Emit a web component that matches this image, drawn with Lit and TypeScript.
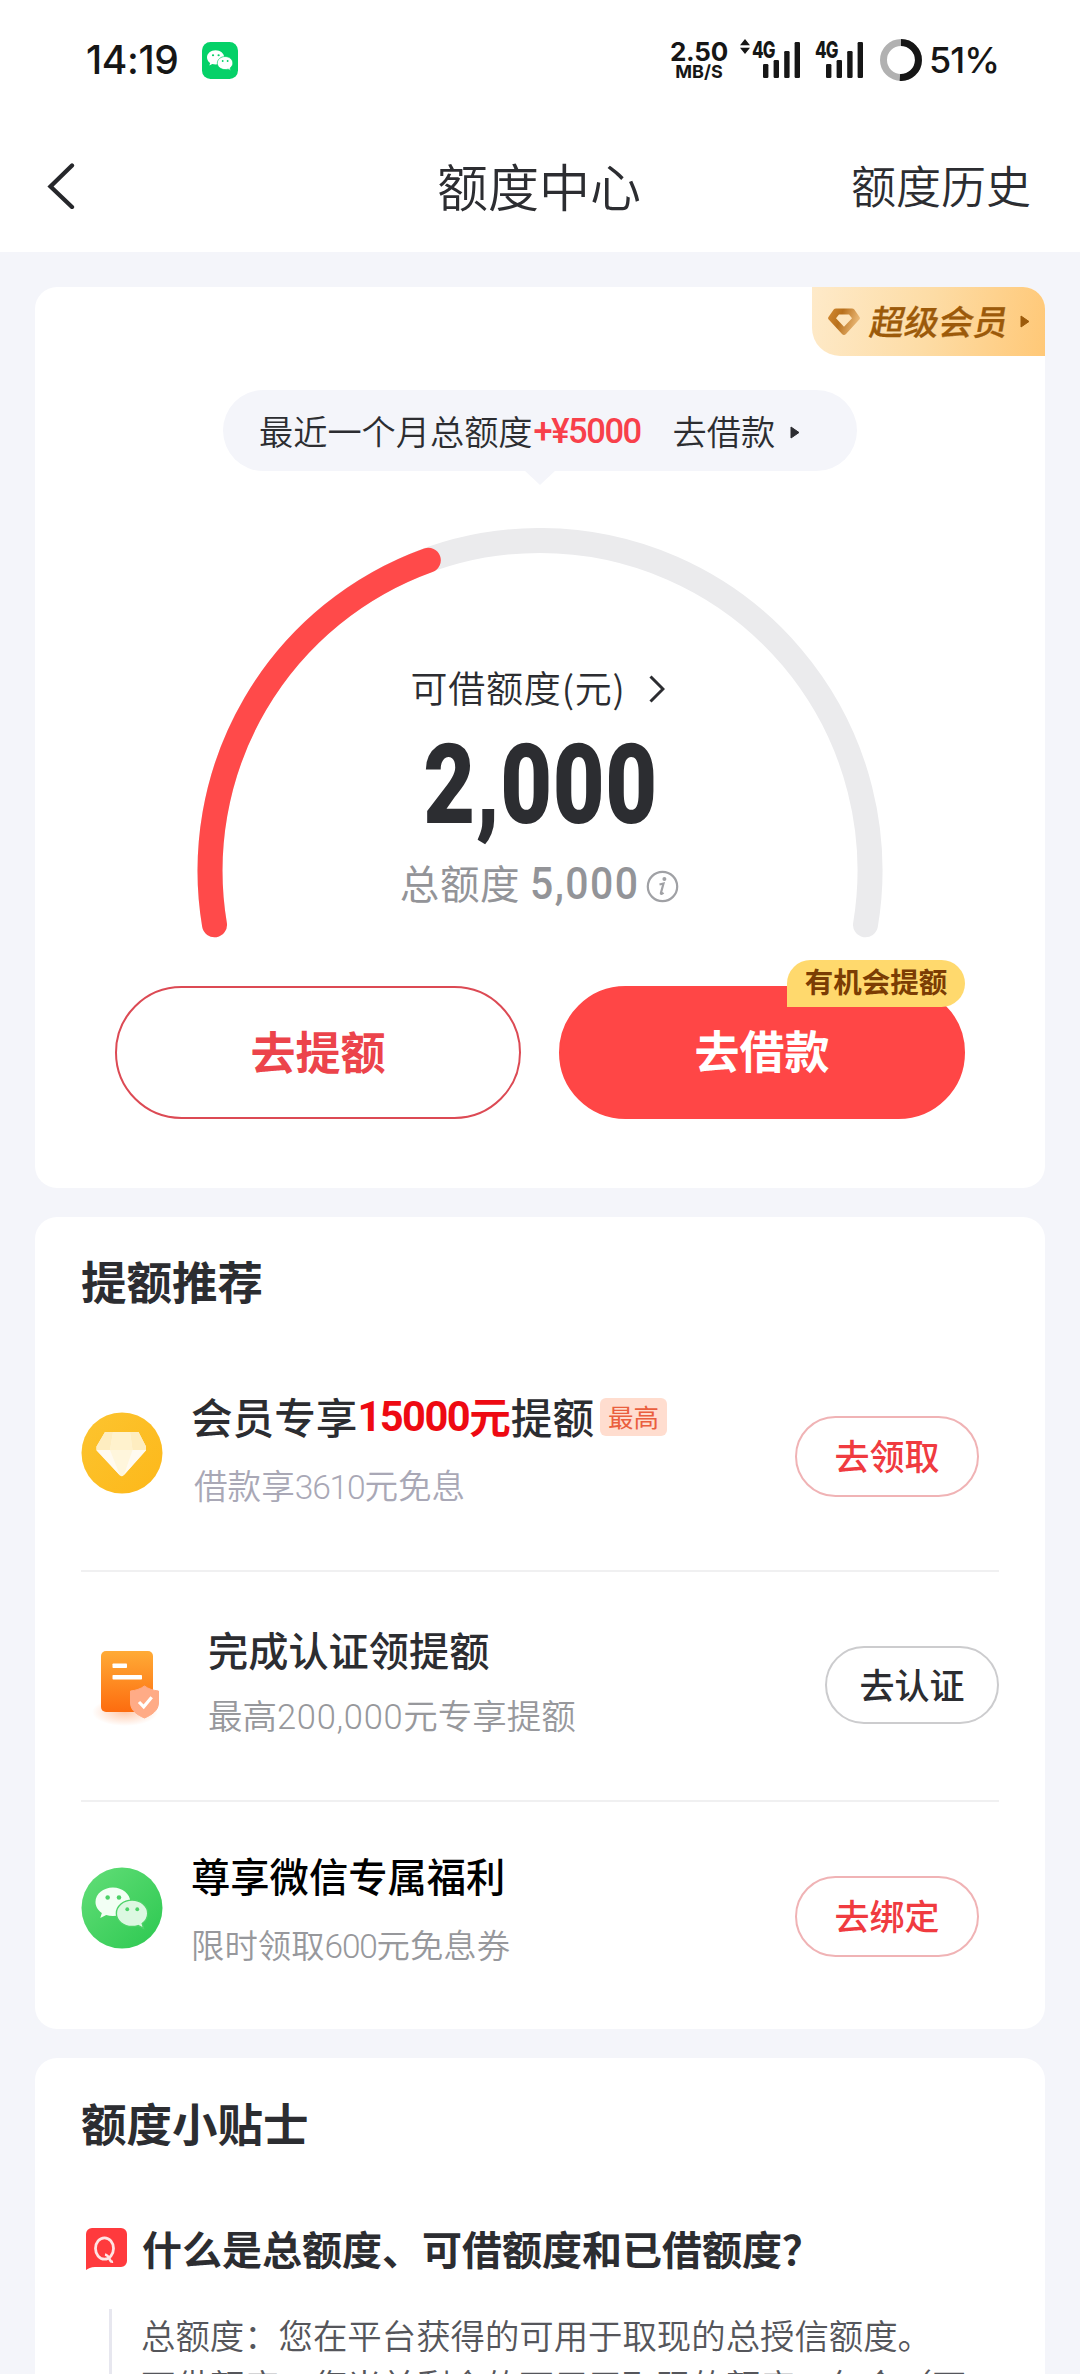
import { LitElement, html, css, svg } from "lit";
import { customElement } from "lit/decorators.js";

const wechatGlyph = (a: string, b: string, eye: string) => svg`
  <path d="M20 0C9 0 0 7.4 0 16.6c0 5.2 2.9 9.7 7.3 12.700L5.500 35.200l6.800-3.500c2.400.7 5 1.100 7.700 1.100C31 32.800 40 25.700 40 16.600S31 0 20 0z" fill="${a}"/>
  <path d="M42 14.500c10 0 18 6.800 18 15.300 0 4.700-2.500 8.800-6.300 11.600l1.500 5.600-6.100-3.200c-2.200.6-4.600 1-7.100 1-10 0-18-6.600-18-15s8-15.300 18-15.300z" fill="${b}" stroke="${eye}" stroke-width="1.600"/>
  <g fill="${eye}"><circle cx="14" cy="11.500" r="2.600"/><circle cx="27" cy="11.500" r="2.600"/>
  <circle cx="36.500" cy="25" r="2.200"/><circle cx="48" cy="25" r="2.200"/></g>`;

const signalBars = html`<svg class="bars" width="37" height="36" viewBox="0 0 37 36">
  <g fill="#161616"><rect x="0" y="22" width="5.400" height="14" rx="1.300"/><rect x="10.600" y="18" width="5.400" height="18" rx="1.300"/>
  <rect x="21.200" y="9" width="5.400" height="27" rx="1.300"/><rect x="31.600" y="0" width="5.400" height="36" rx="1.300"/></g></svg>`;

@customElement("status-bar")
export class StatusBar extends LitElement {
  static styles = css`
    :host { display: flex; height: 120px; padding: 0 80px 0 86px; align-items: center; color: #161616; font-family: Inter, "Liberation Sans", sans-serif; }
    .time { font-size: 39px; font-weight: 500; letter-spacing: -.4px; width: 116px; line-height: 40px; white-space: nowrap; }
    .grow { flex: 1; }
    .speed { width: 60px; text-align: center; line-height: 1; }
    .num { font-size: 26px; font-weight: 700; line-height: 22px; letter-spacing: -.2px; }
    .unit { font-size: 18px; font-weight: 700; line-height: 17px; letter-spacing: 0; }
    .arrows { margin: -27px 2px 0 11px; }
    .net { position: relative; display: flex; width: 48px; height: 36px; justify-content: flex-end; }
    .net + .net { margin-left: 15px; }
    .tag { position: absolute; left: 0; top: -3px; font-size: 22.500px; line-height: 22px; font-weight: 800; letter-spacing: -1px; transform: scaleX(.75); transform-origin: left; }
    .ring { margin-left: 17px; }
    .pct { font-size: 36px; font-weight: 500; letter-spacing: -1px; margin-left: 7px; line-height: 40px; width: 71px; white-space: nowrap; }
  `;
  render() {
    return html`
      <span class="time">14:19</span>
      <svg width="36" height="37" viewBox="0 0 36 37"><rect width="36" height="37" rx="8.500" fill="#05d168"/>
        <g transform="translate(5 8.300) scale(.43)">${wechatGlyph("#fff", "#fff", "#05d168")}</g></svg>
      <span class="grow"></span>
      <div class="speed"><div class="num">2.50</div><div class="unit">MB/S</div></div>
      <svg class="arrows" width="10" height="15" viewBox="0 0 10 15"><path d="M5 0l5 6.200H0zM5 15l5-6.200H0z" fill="#161616"/></svg>
      <div class="net"><span class="tag">4G</span>${signalBars}</div>
      <div class="net"><span class="tag">4G</span>${signalBars}</div>
      <svg class="ring" width="42" height="42" viewBox="0 0 42 42">
        <circle cx="21" cy="21" r="17.500" fill="none" stroke="#b1b1b1" stroke-width="7"/>
        <path d="M21 3.500a17.500 17.500 0 1 1-1.100 34.970" fill="none" stroke="#161616" stroke-width="7"/></svg>
      <span class="pct">51%</span>`;
  }
}

@customElement("quota-gauge")
export class QuotaGauge extends LitElement {
  static styles = css`
    :host { display: block; position: relative; width: 686px; height: 412px; margin: 0 auto; }
    .arc { position: absolute; left: 0; top: 0; }
    .body { position: relative; display: flex; flex-direction: column; align-items: center; padding-top: 137px; }
    .label { display: flex; align-items: center; height: 44px; font-size: 37px; color: #2c2d31; font-weight: 350; letter-spacing: .8px; white-space: nowrap; margin-left: -5px; }
    .label svg { margin: 4px 0 0 23px; }
    .amount { font-family: Roboto, "Liberation Sans", sans-serif; font-weight: 900; font-size: 112px; line-height: 120px; height: 120px; margin-top: 16px; color: #2c2d31; transform: scaleX(.8); letter-spacing: .6px; white-space: nowrap; }
    .total { display: flex; align-items: center; height: 50px; margin-top: 11px; color: #939498; font-size: 39.500px; white-space: nowrap; margin-left: -1px; }
    .cap { letter-spacing: .6px; }
    .val { font-family: Roboto, "Liberation Sans", sans-serif; font-size: 44.500px; line-height: 50px; width: 109px; margin: 6px 0 0 10px; }
    .val span { display: inline-block; transform: scaleX(.92); transform-origin: left; letter-spacing: 1.600px; font-weight: 500; }
    .total svg { margin: 10px 0 0 7px; }
  `;
  render() {
    return html`
      <svg class="arc" width="686" height="412" viewBox="0 0 686 412" fill="none" stroke-width="25" stroke-linecap="round">
        <path d="M17.500 396.800A330 330 0 1 1 668.500 396.800" stroke="#ebebed"/>
        <path d="M17.500 396.800A330 330 0 0 1 231.300 32.200" stroke="#ff4a4a"/></svg>
      <div class="body">
        <div class="label">可借额度(元)<svg width="16" height="28" viewBox="0 0 16 28"><path d="M1.500 1.500L14 14 1.500 26.500" fill="none" stroke="#2c2d31" stroke-width="3"/></svg></div>
        <div class="amount">2,000</div>
        <div class="total"><span class="cap">总额度</span><span class="val"><span>5,000</span></span>
          <svg width="33" height="33" viewBox="0 0 33 33"><circle cx="16.500" cy="16.500" r="14.700" fill="none" stroke="#a0a1a5" stroke-width="2.200"/>
            <circle cx="18.400" cy="9" r="2" fill="#a0a1a5"/><path d="M13.500 14.500l4-1-2.600 9.500c-.3 1.400.9 1.200 2.600-.3" fill="none" stroke="#a0a1a5" stroke-width="2.200"/></svg></div>
      </div>`;
  }
}

const coinIcon = html`<svg width="82" height="82" viewBox="0 0 82 82">
  <defs><linearGradient id="c" x1="0" y1="0" x2="1" y2="1"><stop offset="0" stop-color="#fcc42f"/><stop offset="1" stop-color="#fdb81a"/></linearGradient></defs>
  <circle cx="41" cy="41" r="40.500" fill="url(#c)"/>
  <path d="M24 20h33.500L65 34.500v4L43 63c-1.500 1.600-3 1.600-4.500 0L15.500 38.500v-4z" fill="#fff6dc"/>
  <path d="M24 20h8l-3 18H15.500v-3.500zM57.500 20L65 34.500V38H51.500L49 20z" fill="#feedc0"/>
  <path d="M32 20h17l2.500 18H29z" fill="#fff2cd"/>
  <path d="M15.500 38H29l10 25.500zM65 38H51.500L43 63z" fill="#fffaf0"/></svg>`;

const docIcon = html`<svg width="82" height="90" viewBox="0 0 82 90">
  <defs><linearGradient id="d" x1="0" y1="0" x2="0" y2="1"><stop offset="0" stop-color="#ffab36"/><stop offset="1" stop-color="#fd6c0f"/></linearGradient>
  <radialGradient id="s"><stop offset="0" stop-color="#ff7a30" stop-opacity=".4"/><stop offset="1" stop-color="#ff7a30" stop-opacity="0"/></radialGradient></defs>
  <ellipse cx="44" cy="69" rx="33" ry="14" fill="url(#s)"/>
  <rect x="20" y="8" width="52" height="61" rx="5" fill="url(#d)"/>
  <rect x="31.500" y="20.500" width="14.500" height="4.500" rx=".8" fill="#fff"/><rect x="31.500" y="32" width="29.500" height="4.500" rx=".8" fill="#fff"/>
  <path d="M63.500 43c4 3 9 4.500 14 5v12c0 7.500-7 12-14 15-7-3-14-7.500-14-15V48c5-.5 10-2 14-5z" fill="#ffab86" stroke="#ffab86" stroke-linejoin="round"/>
  <path d="M58 59l4.700 4.800 8-9.500" fill="none" stroke="#fff" stroke-width="3.200"/></svg>`;

const wechatIcon = html`<svg width="82" height="82" viewBox="0 0 82 82">
  <defs><linearGradient id="w" x1="0" y1="0" x2="1" y2="1"><stop offset="0" stop-color="#63de78"/><stop offset="1" stop-color="#2cc850"/></linearGradient></defs>
  <circle cx="41" cy="41" r="40.500" fill="url(#w)"/>
  <g transform="translate(14.500 20.500) scale(.87)">${wechatGlyph("#f2fff4", "#dcf8e1", "#4dd268")}</g></svg>`;

@customElement("app-root")
export class AppRoot extends LitElement {
  static styles = css`
    * { box-sizing: border-box; }
    :host { display: block; width: 1080px; height: 2374px; overflow: hidden; background: #f4f5fa; color: #2c2d31;
      font-family: "Noto Sans CJK SC", sans-serif; }
    .top { background: #fff; height: 252px; }
    .nav { display: grid; grid-template-columns: 1fr auto 1fr; align-items: center; height: 132px; padding: 0 49px 0 47px; font-weight: 350; white-space: nowrap; }
    .title { font-size: 51px; line-height: 60px; margin-top: -3px; }
    .history { font-size: 45px; line-height: 60px; text-align: right; margin-top: -2px; }
    .cards { display: flex; flex-direction: column; gap: 29px; padding: 35px 35px 0; }
    .card { position: relative; background: #fff; border-radius: 22px; }
    .quota { height: 901px; padding-top: 103px; }
    .member { position: absolute; right: 0; top: 0; width: 233px; height: 69px; border-radius: 0 22px 0 28px; display: flex; align-items: center; padding-left: 16px;
      background: linear-gradient(100deg, #feeac9, #fddca5 50%, #ffc877); color: #9c5a0a; font-size: 34.500px; font-weight: 500; -webkit-text-stroke: .3px #9c5a0a; white-space: nowrap; }
    .member span { transform: skewX(-10deg); margin: -4px 11px 0 11px; }
    .pill { position: relative; width: 634px; height: 81px; margin: 0 0 0 188px; border-radius: 41px; background: #f4f5fa; display: flex; align-items: center; padding: 0 0 2px 36px;
      font-size: 34.200px; font-weight: 350; white-space: nowrap; }
    .pill b { color: #f8404a; font-family: Roboto, sans-serif; font-weight: 500; font-size: 34.500px; letter-spacing: -1.450px; width: 107px; margin: 2px 0 0 1px; }
    .pill .go { margin: 0 15px 0 32px; }
    .pill .play { margin-top: 5px; }
    .tip { position: absolute; left: 301px; top: 80px; }
    quota-gauge { margin-top: 57px; }
    .actions { display: flex; gap: 38px; margin: 46px 0 0 80px; }
    .big { position: relative; width: 406px; height: 133px; border-radius: 67px; display: flex; align-items: center; justify-content: center; font-size: 45px; font-weight: 700; color: #ec444b; border: 2px solid #dc4a54; padding-bottom: 4px; }
    .big.solid { background: #ff4646; border-color: #ff4646; color: #fff; padding-bottom: 7px; }
    .chance { position: absolute; right: -2px; top: -28px; width: 178px; height: 47px; line-height: 42px; border-radius: 24px 24px 24px 0; background: #ffd96d; color: #7b3d04; font-size: 28.500px; text-align: center; }
    .rec { height: 812px; padding: 0 46px; }
    h2 { margin: 0; font-size: 45.500px; line-height: 60px; padding-top: 34px; font-weight: 700; }
    .rec h2 { padding-top: 33px; height: 94px; }
    .row { display: flex; height: 230px; }
    .row + .row { border-top: 2px solid #f0f0f1; }
    .icon { width: 82px; flex: none; }
    .icon svg { display: block; }
    .txt { flex: 1; white-space: nowrap; }
    .name { display: flex; align-items: center; font-size: 41px; line-height: 50px; height: 50px; font-weight: 500; }
    .name em { font-style: normal; color: #ee0a12; font-weight: 700; display: flex; }
    .din { font-family: Roboto, sans-serif; letter-spacing: -1.200px; }
    .top-tag { background: #ffddcf; color: #ea5f3e; font-size: 25.500px; width: 67px; height: 38px; line-height: 36px; border-radius: 6px; text-align: center; margin: 1px 0 0 6px; font-weight: 400; }
    .sub { font-size: 34px; line-height: 44px; color: #97989c; font-weight: 350; }
    .small { width: 184px; height: 81px; border: 2px solid #f0b3b5; border-radius: 41px; color: #f03b40; font-size: 35px; font-weight: 500; display: flex; align-items: center; justify-content: center; padding-bottom: 4px; margin-right: 20px; }
    .r1 { height: 212px; margin-top: 47px; }
    .r1 .icon { margin-top: 54px; }
    .r1 .txt { margin: 33px 0 0 28px; }
    .r1 .name { font-size: 41.600px; }
    .r1 .name em .din { letter-spacing: -1.500px; margin-top: 2px; }
    .r1 .sub { margin: 22px 0 0 3px; color: #a9a8b6; font-size: 33.600px; }
    .r1 .small { margin-top: 58px; }
    .r2 .icon { margin-top: 71px; }
    .r2 .txt { margin: 52px 0 0 45px; }
    .r2 .name { font-size: 40.200px; }
    .r2 .sub { margin-top: 18px; font-size: 34.500px; }
    .r2 .sub .din { letter-spacing: .7px; }
    .r2 .small { width: 174px; height: 78px; margin: 74px 0 0 0; border-color: #ccccce; color: #2c2d31; }
    .r3 .icon { margin-top: 65px; }
    .r3 .txt { margin: 48px 0 0 28px; }
    .r3 .name { font-size: 39.300px; color: #000; }
    .r3 .sub { margin-top: 22px; font-size: 33.400px; }
    .r3 .small { margin-top: 74px; }
    .tips { height: 500px; padding: 0 46px; }
    .q { display: flex; align-items: center; margin-top: 67px; height: 60px; padding-left: 5px; gap: 15px; font-size: 40px; font-weight: 700; white-space: nowrap; }
    .q span { margin-top: -2px; }
    .answer { margin: 32px 0 0 28px; border-left: 3px solid #e7e7ef; padding-left: 29px; height: 200px; font-size: 34.400px; line-height: 50px; color: #55565b; font-weight: 350; white-space: nowrap; }
    .answer p { margin: -2px 0 0; }
  `;
  render() {
    return html`
      <div class="top">
        <status-bar></status-bar>
        <div class="nav">
          <svg width="28" height="46" viewBox="0 0 28 46"><path d="M25 2.500L3.500 23.500 25 44" fill="none" stroke="#26272b" stroke-width="4.300" stroke-linecap="round"/></svg>
          <div class="title">额度中心</div>
          <div class="history">额度历史</div>
        </div>
      </div>
      <div class="cards">
        <section class="card quota">
          <div class="member">
            <svg width="32" height="27" viewBox="0 0 32 27"><defs><linearGradient id="g" x1="0" y1="0" x2="1" y2=".3"><stop offset="0" stop-color="#d48a32"/><stop offset=".45" stop-color="#b8701c"/><stop offset="1" stop-color="#eab876"/></linearGradient></defs>
              <path fill="url(#g)" fill-rule="evenodd" d="M8 .5h16c1 0 1.700.3 2.300 1L31.500 9c.6.9.5 1.700-.2 2.500L18 26c-1.200 1.200-2.800 1.200-4 0L.7 11.500C0 10.700-.1 9.900.5 9L5.700 1.500C6.300.8 7 .5 8 .500zM11 6.500L8 10.300 16 18.800l8-8.500L21 6.500z"/></svg>
            <span>超级会员</span>
            <svg width="10" height="13" viewBox="0 0 10 13"><path d="M1 1l8 5.500L1 12z" fill="#9c5a0a" stroke="#9c5a0a" stroke-linejoin="round"/></svg>
          </div>
          <div class="pill">最近一个月总额度<b>+¥5000</b><span class="go">去借款</span>
            <svg class="play" width="10" height="13" viewBox="0 0 10 13"><path d="M1 1l8 5.500L1 12z" fill="#2c2d31" stroke="#2c2d31" stroke-linejoin="round"/></svg>
            <svg class="tip" width="32" height="15" viewBox="0 0 32 15"><path d="M0 0h32L16 15z" fill="#f4f5fa"/></svg>
          </div>
          <quota-gauge></quota-gauge>
          <div class="actions">
            <div class="big">去提额</div>
            <div class="big solid">去借款<span class="chance">有机会提额</span></div>
          </div>
        </section>
        <section class="card rec">
          <h2>提额推荐</h2>
          <div class="row r1">
            <div class="icon">${coinIcon}</div>
            <div class="txt"><div class="name">会员专享<em><span class="din">15000</span>元</em>提额<span class="top-tag">最高</span></div>
              <div class="sub">借款享<span class="din">3610</span>元免息</div></div>
            <div class="small">去领取</div>
          </div>
          <div class="row r2">
            <div class="icon">${docIcon}</div>
            <div class="txt"><div class="name">完成认证领提额</div><div class="sub">最高<span class="din">200,000</span>元专享提额</div></div>
            <div class="small">去认证</div>
          </div>
          <div class="row r3">
            <div class="icon">${wechatIcon}</div>
            <div class="txt"><div class="name">尊享微信专属福利</div><div class="sub">限时领取<span class="din">600</span>元免息券</div></div>
            <div class="small">去绑定</div>
          </div>
        </section>
        <section class="card tips">
          <h2>额度小贴士</h2>
          <div class="q"><svg width="41" height="42" viewBox="0 0 41 42"><path d="M6 0h29a6 6 0 0 1 6 6v27a6 6 0 0 1-6 6H9c-4 0-7 1.500-9 3V6a6 6 0 0 1 6-6z" fill="#ff3a3d"/>
            <ellipse cx="18.500" cy="20.500" rx="9" ry="10.700" fill="none" stroke="#ffe4e4" stroke-width="2.800"/><path d="M19 26.500c3 .5 4 3 5 5.500.6 1.500 1.500 2 3 1.700" fill="none" stroke="#ffe4e4" stroke-width="2.600"/></svg>
            <span>什么是总额度、可借额度和已借额度？</span></div>
          <div class="answer"><p>总额度：您在平台获得的可用于取现的总授信额度。<br>可借额度：您当前剩余的可用于取现的额度，包含（不</p></div>
        </section>
      </div>`;
  }
}
